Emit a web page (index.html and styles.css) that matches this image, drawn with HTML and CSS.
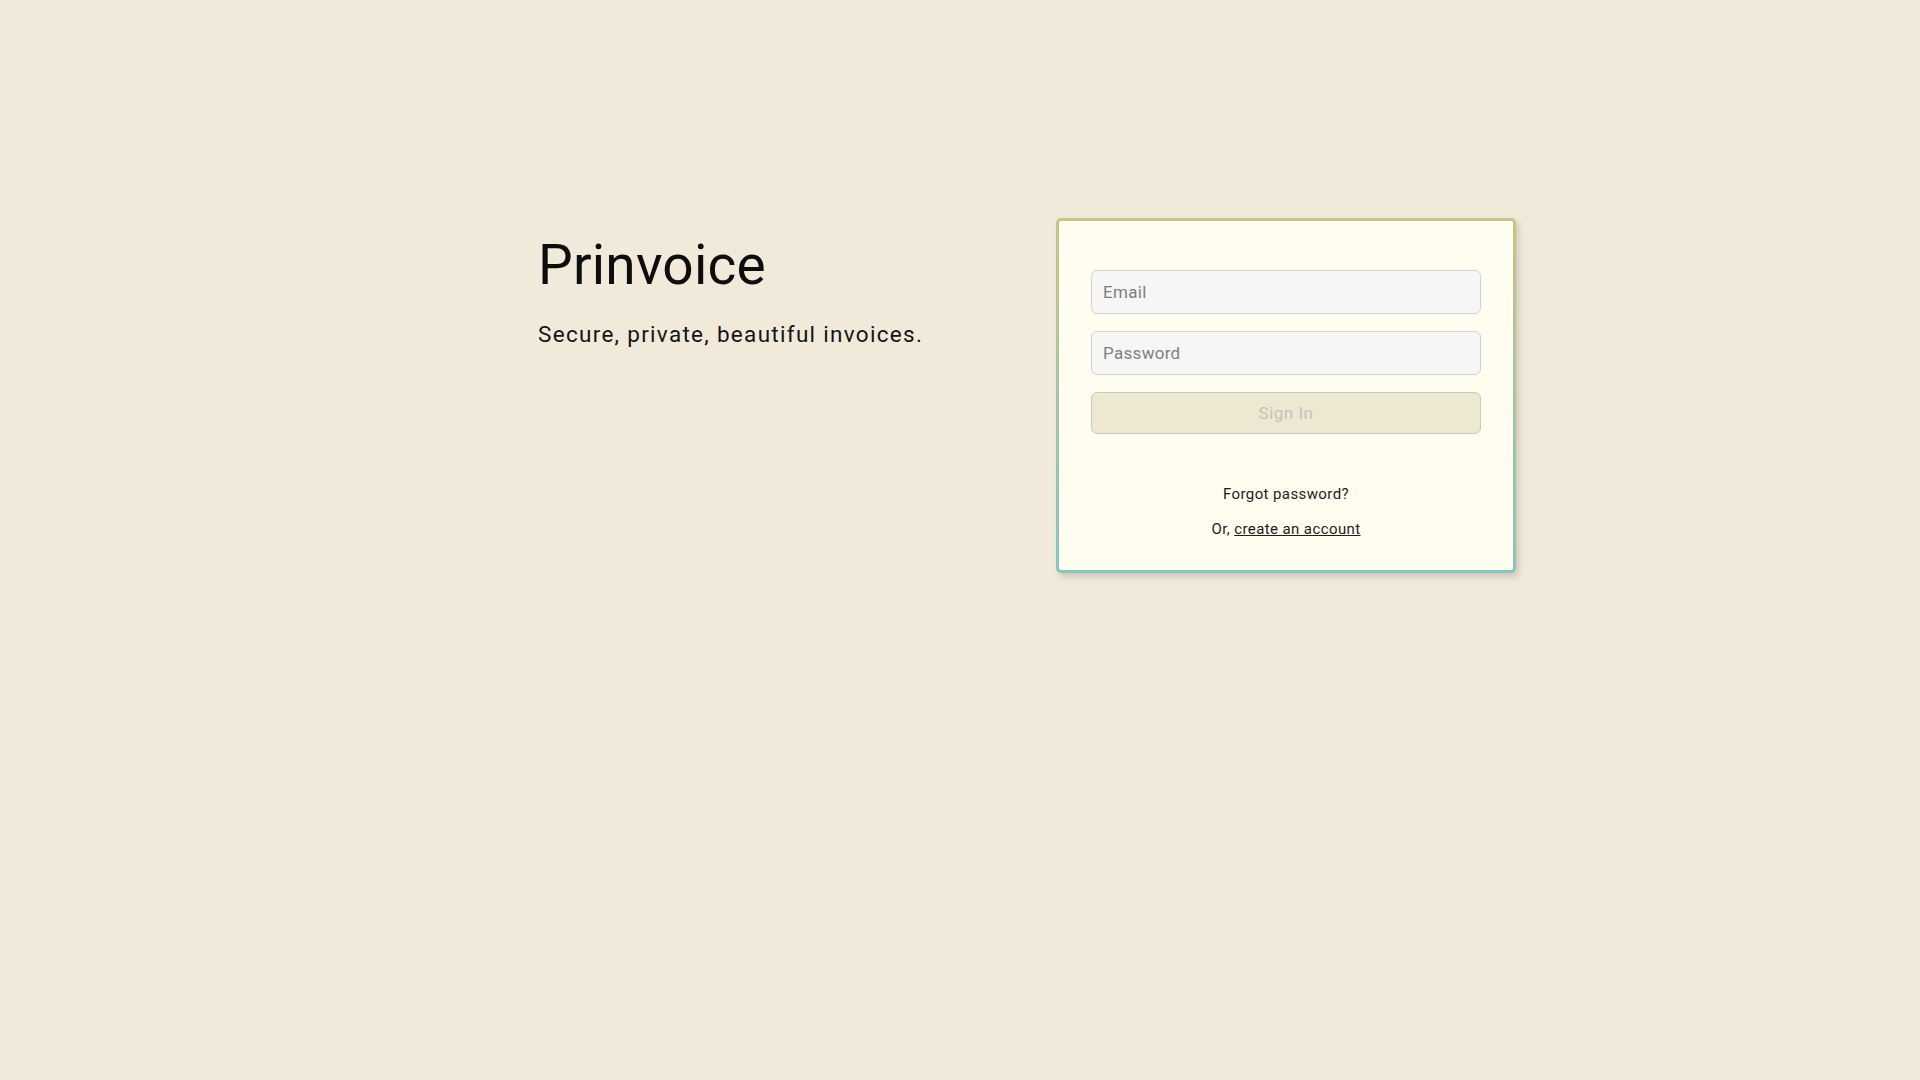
FILE: index.html
```html
<!DOCTYPE html>
<html lang="en">
<head>
<meta charset="utf-8">
<title>Prinvoice</title>
<link rel="stylesheet" href="styles.css">
</head>
<body>
<main class="page">
  <section class="intro">
    <h1 class="brand">Prinvoice</h1>
    <p class="tagline">Secure, private, beautiful invoices.</p>
  </section>
  <section class="card">
    <form class="form">
      <input class="field" type="email" placeholder="Email">
      <input class="field" type="password" placeholder="Password">
      <button class="submit" type="button" disabled>Sign In</button>
    </form>
    <div class="links">
      <p class="link-line">Forgot password?</p>
      <p class="link-line">Or, <a class="link" href="#">create an account</a></p>
    </div>
  </section>
</main>
</body>
</html>
```

FILE: styles.css
```css
html, body {
  margin: 0;
  padding: 0;
  height: 100%;
}

body {
  background: #f1eada;
  font-family: Roboto, "Liberation Sans", sans-serif;
  color: #111;
}

.page {
  display: flex;
  justify-content: center;
  align-items: flex-start;
  padding: 218px 0 0 134px;
  box-sizing: border-box;
  min-height: 100%;
}

.intro {
  width: 518px;
  padding-top: 19px;
}

.brand {
  margin: 0;
  font-size: 55px;
  line-height: 56px;
  font-weight: 400;
  letter-spacing: 0.2px;
  color: #0d0d0d;
}

.tagline {
  margin: 30px 0 0;
  font-size: 22.5px;
  line-height: 22px;
  font-weight: 400;
  letter-spacing: 1.3px;
  color: #141414;
}

.card {
  width: 460px;
  box-sizing: border-box;
  border: 3px solid transparent;
  border-radius: 5px;
  background:
    linear-gradient(#fffdf0, #fffdf0) padding-box,
    linear-gradient(#c7c487, #86c6c1) border-box;
  box-shadow: 3px 4px 6px rgba(90, 80, 50, 0.22);
  padding: 49px 32px 31px;
}

.form {
  display: flex;
  flex-direction: column;
  gap: 17px;
}

.field {
  height: 44px;
  box-sizing: border-box;
  border: 1px solid #d3d2cf;
  border-radius: 6px;
  background: #f6f6f4;
  padding: 0 11px;
  font-family: inherit;
  font-size: 17px;
  letter-spacing: 0.3px;
  color: #333;
}

.field::placeholder {
  color: #7f7f7f;
}

.submit {
  height: 42px;
  box-sizing: border-box;
  border: 1px solid #cbcac2;
  border-radius: 6px;
  background: #ede8d1;
  font-family: inherit;
  font-size: 17px;
  letter-spacing: 0.5px;
  color: #c2c2ba;
}

.links {
  margin-top: 50px;
  display: flex;
  flex-direction: column;
  align-items: center;
  gap: 15px;
}

.link-line {
  margin: 0;
  font-size: 15px;
  line-height: 20px;
  letter-spacing: 0.4px;
  color: #1c1c1c;
}

.link {
  color: #1c1c1c;
  text-decoration: underline;
}
```
